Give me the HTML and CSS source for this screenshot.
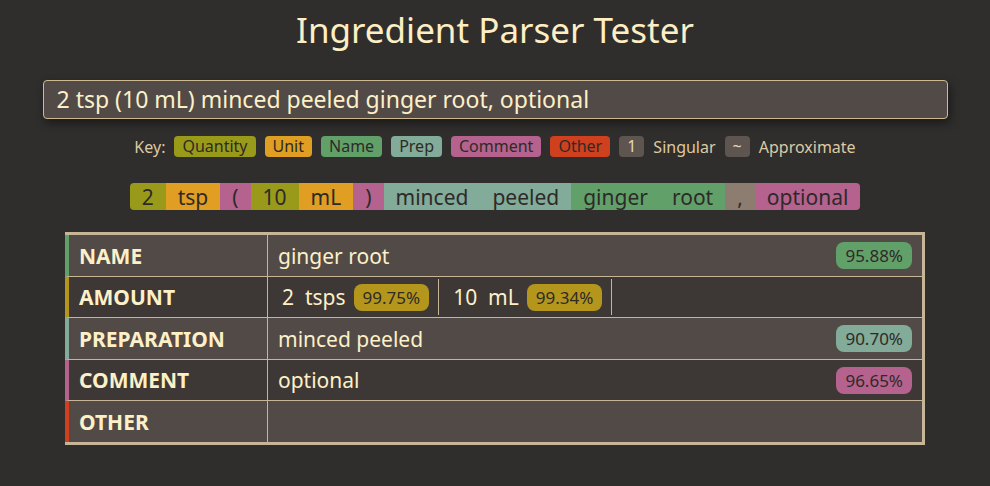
FILE: index.html
```html
<!DOCTYPE html>
<html>
<head>
<meta charset="utf-8">
<link rel="stylesheet" href="styles.css">
</head>
<body>
<main class="page">
  <h1 class="title">Ingredient Parser Tester</h1>
  <div class="input-box">2 tsp (10 mL) minced peeled ginger root, optional</div>

  <div class="key">
    <span class="key-label">Key:</span>
    <span class="chip c-qty">Quantity</span>
    <span class="chip c-unit">Unit</span>
    <span class="chip c-name">Name</span>
    <span class="chip c-prep">Prep</span>
    <span class="chip c-comment">Comment</span>
    <span class="chip c-other">Other</span>
    <span class="chip c-flag">1</span>
    <span class="key-label">Singular</span>
    <span class="chip c-flag">~</span>
    <span class="key-label">Approximate</span>
  </div>

  <div class="tokens">
    <span class="tok c-qty">2</span><span class="tok c-unit">tsp</span><span class="tok c-comment">(</span><span class="tok c-qty">10</span><span class="tok c-unit">mL</span><span class="tok c-comment">)</span><span class="tok c-prep">minced</span><span class="tok c-prep">peeled</span><span class="tok c-name">ginger</span><span class="tok c-name">root</span><span class="tok c-punc">,</span><span class="tok c-comment">optional</span>
  </div>

  <div class="results">
    <div class="row row-light b-name h42">
      <div class="label">NAME</div>
      <div class="value"><span>ginger root</span><span class="conf c-name">95.88%</span></div>
    </div>
    <div class="row row-dark b-amount">
      <div class="label">AMOUNT</div>
      <div class="value amounts">
        <div class="amt"><span class="amt-text">2&nbsp; tsps</span><span class="conf c-gold">99.75%</span></div>
        <div class="amt"><span class="amt-text">10&nbsp; mL</span><span class="conf c-gold">99.34%</span></div>
      </div>
    </div>
    <div class="row row-light b-prep h42">
      <div class="label">PREPARATION</div>
      <div class="value"><span>minced peeled</span><span class="conf c-prep">90.70%</span></div>
    </div>
    <div class="row row-dark b-comment">
      <div class="label">COMMENT</div>
      <div class="value"><span>optional</span><span class="conf c-comment">96.65%</span></div>
    </div>
    <div class="row row-light b-other last">
      <div class="label">OTHER</div>
      <div class="value"></div>
    </div>
  </div>
</main>
</body>
</html>
```

FILE: styles.css
```css
* { box-sizing: border-box; }
html, body { margin: 0; padding: 0; }
body {
  background: #302e2c;
  color: #fdf0c8;
  font-family: "Noto Sans", "Open Sans", sans-serif;
  width: 990px;
  height: 486px;
  overflow: hidden;
}
.page {
  display: flex;
  flex-direction: column;
  align-items: center;
  padding-top: 6px;
}
.title {
  margin: 0;
  font-size: 35px;
  font-weight: 400;
  line-height: 48px;
  color: #fdeec4;
}
.input-box {
  margin-top: 26px;
  width: 905px;
  height: 39px;
  background: #524a47;
  border: 1px solid #cdb992;
  border-radius: 4px;
  box-shadow: 2px 4px 10px rgba(0,0,0,0.45);
  font-size: 23px;
  line-height: 37px;
  padding: 0 13px;
  color: #fdf0c8;
}
.key {
  margin-top: 17px;
  display: flex;
  align-items: center;
  gap: 9px;
  font-size: 16px;
  height: 21px;
}
.key-label { color: #dccaa5; }
.chip {
  display: inline-block;
  height: 21px;
  line-height: 21px;
  padding: 0 8px;
  border-radius: 4px;
  color: #2f2a26;
}
.c-qty { background: #999a1a; }
.c-unit { background: #e09e22; }
.c-name { background: #62a06a; }
.c-prep { background: #82ab9a; }
.c-comment { background: #b5628f; }
.c-other { background: #cf401e; }
.c-flag { background: #5f5550; color: #e6d7b6; padding: 0 8px; }
.c-punc { background: #8d7c70; }
.c-gold { background: #b4961c; }

.tokens {
  margin-top: 26px;
  display: flex;
  height: 27px;
  border-radius: 4px;
  overflow: hidden;
  font-size: 21px;
  line-height: 28px;
}
.tok {
  padding: 0 12px;
  color: #2d2a28;
}

.results {
  margin-top: 22px;
  width: 860px;
  border: 3px solid #c6b596;
  border-left: none;
  display: flex;
  flex-direction: column;
}
.row {
  display: grid;
  grid-template-columns: 199px 1fr;
  height: 41px;
  border-left: 4px solid;
  border-bottom: 1px solid #c6b596;
}
.row.h42 { height: 42px; }
.row.last { border-bottom: none; height: 41px; }
.row-light { background: #524a47; }
.row-dark { background: #3d3835; }
.b-name { border-left-color: #62a06a; }
.b-amount { border-left-color: #b4961c; }
.b-prep { border-left-color: #82ab9a; }
.b-comment { border-left-color: #b5628f; }
.b-other { border-left-color: #cf401e; }
.label {
  border-right: 1px solid #c6b596;
  font-weight: 700;
  font-size: 21px;
  padding-left: 10px;
  display: flex;
  align-items: center;
  color: #fdf0c8;
}
.value {
  display: flex;
  align-items: center;
  justify-content: space-between;
  padding: 0 10px;
  font-size: 21px;
  color: #fdf0c8;
}
.conf {
  display: inline-block;
  height: 27px;
  line-height: 27px;
  padding: 0 9px;
  border-radius: 8px;
  font-size: 17px;
  color: #2f2a26;
}
.amounts {
  justify-content: flex-start;
  padding-left: 14px;
}
.amt {
  display: flex;
  align-items: center;
  gap: 8px;
  padding-right: 9px;
  margin-right: 14px;
  border-right: 1px solid #c6b596;
  height: 36px;
}
```
